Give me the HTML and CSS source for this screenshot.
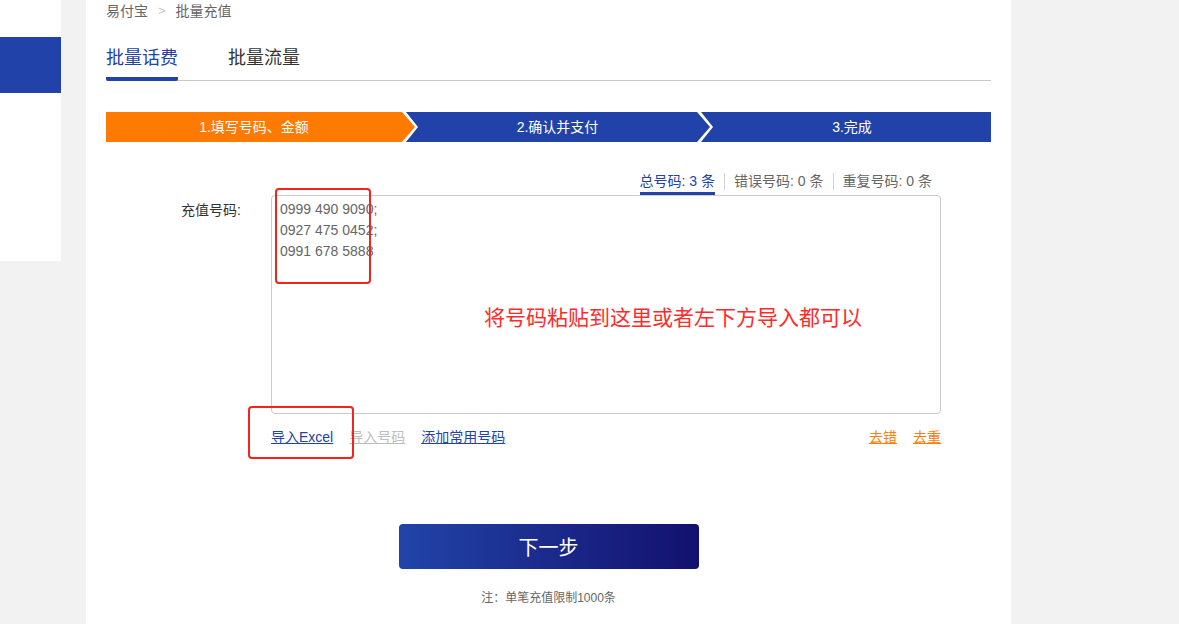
FILE: index.html
```html
<!DOCTYPE html>
<html lang="zh-CN">
<head>
<meta charset="utf-8">
<title>批量充值</title>
<link rel="stylesheet" href="styles.css">
</head>
<body>
<div class="page">
  <aside class="sidebar">
    <div class="side-active"></div>
  </aside>
  <main class="main">
    <div class="crumbs"><span>易付宝</span><span class="crumb-sep">&gt;</span><span>批量充值</span></div>
    <div class="tabs">
      <span class="tab active">批量话费</span>
      <span class="tab">批量流量</span>
    </div>
    <div class="steps">
      <div class="step step-first current">1.填写号码、金额</div>
      <div class="step">2.确认并支付</div>
      <div class="step step-last">3.完成</div>
    </div>
    <div class="counts">
      <span class="count count-active">总号码: 3 条</span>
      <span class="count-sep"></span>
      <span class="count">错误号码: 0 条</span>
      <span class="count-sep"></span>
      <span class="count">重复号码: 0 条</span>
    </div>
    <div class="form-row">
      <label class="form-label">充值号码:</label>
      <div class="field">
        <textarea class="numbers" spellcheck="false">0999 490 9090;
0927 475 0452;
0991 678 5888</textarea>
        <div class="actions">
          <div class="actions-left">
            <a class="link">导入Excel</a>
            <a class="link link-disabled">导入号码</a>
            <a class="link">添加常用号码</a>
          </div>
          <div class="actions-right">
            <a class="link link-orange">去错</a>
            <a class="link link-orange">去重</a>
          </div>
        </div>
        <div class="mark mark-numbers"></div>
        <div class="mark mark-excel"></div>
        <div class="hint">将号码粘贴到这里或者左下方导入都可以</div>
      </div>
    </div>
    <button class="next">下一步</button>
    <p class="note">注：单笔充值限制1000条</p>
  </main>
</div>
</body>
</html>
```

FILE: styles.css
```css
* { box-sizing: border-box; }

html, body {
  margin: 0;
  padding: 0;
  background: #f2f2f2;
  font-family: "Liberation Sans", "Noto Sans CJK SC", sans-serif;
  color: #333;
}

.page {
  display: flex;
  align-items: flex-start;
  width: 1179px;
  height: 624px;
  overflow: hidden;
}

.sidebar {
  width: 61px;
  height: 261px;
  background: #fff;
  padding-top: 37px;
  margin-right: 25px;
  flex-shrink: 0;
}

.side-active {
  height: 56px;
  background: #2142a8;
}

.main {
  width: 925px;
  height: 624px;
  background: #fff;
  padding: 0 20px;
  flex-shrink: 0;
}

.crumbs {
  font-size: 14px;
  line-height: 22px;
  color: #666;
  display: flex;
  gap: 10px;
}

.crumb-sep {
  color: #c8c8c8;
  font-size: 13px;
}

.tabs {
  margin-top: 24px;
  display: flex;
  gap: 50px;
  border-bottom: 1px solid #c8c8c8;
}

.tab {
  font-size: 18px;
  line-height: 24px;
  padding-bottom: 7px;
  border-bottom: 4px solid transparent;
  margin-bottom: -1px;
  color: #333;
}

.tab.active {
  color: #2142a8;
  border-bottom-color: #2142a8;
  border-radius: 0 0 2px 2px;
}

.steps {
  margin-top: 31px;
  display: flex;
  height: 30px;
}

.step {
  height: 30px;
  line-height: 30px;
  font-size: 14px;
  color: #fff;
  text-align: center;
  background: #2142a8;
  width: 304px;
  margin-left: -9px;
  padding: 0 13px 0 12px;
  clip-path: polygon(0 0, calc(100% - 13px) 0, 100% 50%, calc(100% - 13px) 100%, 0 100%, 12px 50%);
}

.step-first {
  margin-left: 0;
  width: 309px;
  padding-left: 0;
  clip-path: polygon(0 0, calc(100% - 13px) 0, 100% 50%, calc(100% - 13px) 100%, 0 100%);
}

.step-last {
  width: 290px;
  padding-right: 0;
  clip-path: polygon(0 0, 100% 0, 100% 100%, 0 100%, 12px 50%);
}

.step.current {
  background: #ff7a00;
}

.counts {
  margin-top: 29px;
  display: flex;
  justify-content: flex-end;
  align-items: flex-start;
  padding-right: 59px;
  font-size: 14px;
  line-height: 20px;
  color: #666;
}

.count {
  padding-bottom: 1px;
  border-bottom: 3px solid transparent;
}

.count-active {
  color: #2142a8;
  border-bottom-color: #2142a8;
}

.count-sep {
  width: 1px;
  height: 17px;
  margin: 2px 9px 0;
  background: #d0d0d0;
}

.form-row {
  display: flex;
  gap: 25px;
}

.form-label {
  width: 140px;
  text-align: right;
  font-size: 14px;
  line-height: 20px;
  padding-top: 5px;
  padding-right: 5px;
  color: #333;
}

.field {
  position: relative;
  width: 670px;
}

.numbers {
  display: block;
  width: 670px;
  height: 219px;
  margin: 0;
  border: 1px solid #ccc;
  border-radius: 4px;
  padding: 3px 8px;
  font-family: "Liberation Sans", "Noto Sans CJK SC", sans-serif;
  font-size: 14px;
  line-height: 21px;
  color: #666;
  resize: none;
  outline: none;
  overflow: hidden;
}

.actions {
  margin-top: 13px;
  display: flex;
  justify-content: space-between;
  font-size: 14px;
  line-height: 20px;
}

.actions-left, .actions-right {
  display: flex;
  gap: 16px;
}

.link {
  color: #2142a8;
  text-decoration: underline;
  cursor: pointer;
}

.link-disabled {
  color: #bdbdbd;
}

.link-orange {
  color: #ff7e00;
}

.mark {
  position: absolute;
  border: 2px solid #f0251e;
  border-radius: 4px;
}

.mark-numbers {
  left: 4px;
  top: -7px;
  width: 96px;
  height: 96px;
}

.mark-excel {
  left: -23px;
  top: 211px;
  width: 106px;
  height: 53px;
}

.hint {
  position: absolute;
  left: 213px;
  top: 108px;
  font-size: 21px;
  line-height: 30px;
  color: #ff2a2a;
  white-space: nowrap;
}

.next {
  display: block;
  margin: 77px auto 0;
  width: 300px;
  height: 45px;
  border: 0;
  border-radius: 4px;
  background: linear-gradient(90deg, #2244a9 0%, #13106e 100%);
  color: #fff;
  font-family: "Liberation Sans", "Noto Sans CJK SC", sans-serif;
  font-size: 20px;
  cursor: pointer;
}

.note {
  margin: 19px 0 0;
  text-align: center;
  font-size: 12px;
  line-height: 20px;
  color: #666;
}
```
